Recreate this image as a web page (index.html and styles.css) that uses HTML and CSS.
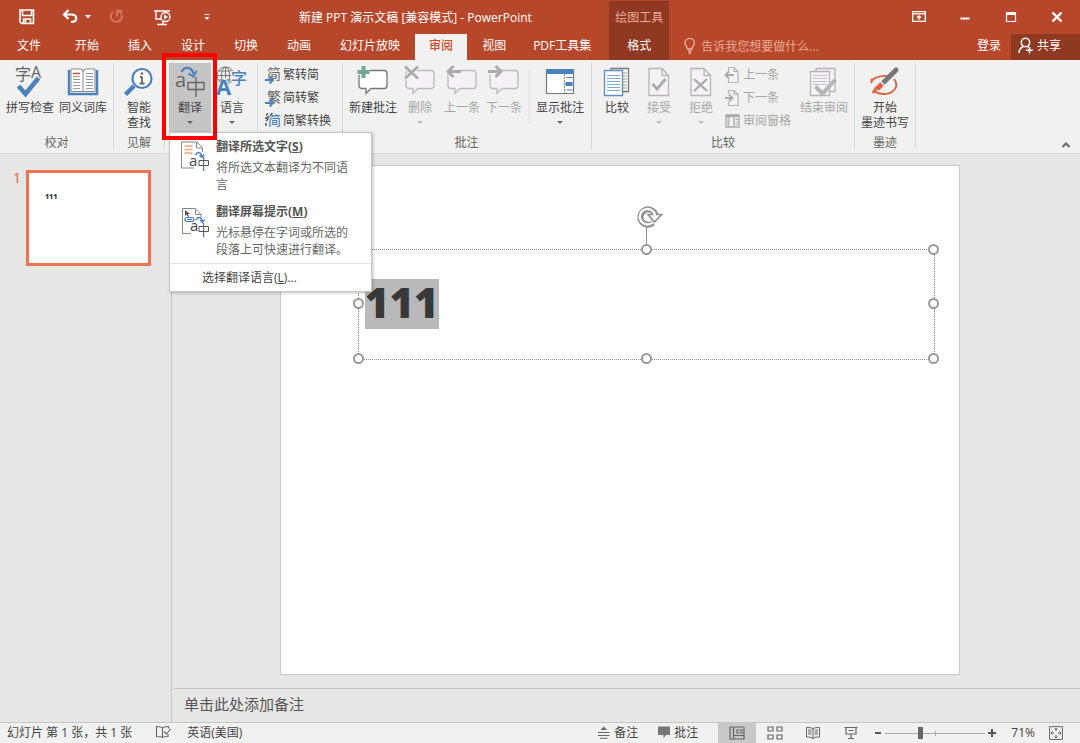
FILE: index.html
```html
<!DOCTYPE html>
<html lang="zh-CN">
<head>
<meta charset="utf-8">
<title>新建 PPT 演示文稿 [兼容模式] - PowerPoint</title>
<link rel="stylesheet" href="styles.css">
</head>
<body>
<header class="header">
  <div class="titlebar">
    <div class="quick">
      <button class="quick-btn save" aria-label="保存"><svg width="16" height="16" viewBox="19 8 16 16"><path d="M20 9h13.500v13.500h-12l-1.500-1.500zM22.500 9v5.500h9V9M23.500 22.500v-4.500h7v4.500M25.500 19v3" fill="none" stroke="#fff" stroke-width="1.600"/></svg></button>
      <button class="quick-btn undo" aria-label="撤消"><svg width="30" height="16" viewBox="62 8 30 16"><path d="M68.500 9l-4.500 4.500 4.500 4.500M64.500 13.500h6.500c7 0 7 7.500 0 7.500" fill="none" stroke="#fff" stroke-width="2.200"/><path d="M85 14h6l-3 3.500z" fill="#fff"/></svg></button>
      <button class="quick-btn redo" aria-label="恢复"><svg width="16" height="16" viewBox="109 8 16 16"><path d="M113 11a5.500 5.500 0 1 0 6-.5M117 15.500v-5.500h5.500" fill="none" stroke="#d67a62" stroke-width="1.800"/></svg></button>
      <button class="quick-btn show" aria-label="从头开始"><svg width="18" height="17" viewBox="154 8 18 17"><path d="M154 10h16M156 10v8h5M163 20v3.500M157 23.500h10" fill="none" stroke="#fff" stroke-width="1.400"/><circle cx="165.500" cy="16" r="4.500" fill="#b7472a" stroke="#fff" stroke-width="1.300"/><path d="M164 13.500l4 2.500-4 2.500z" fill="#fff"/></svg></button>
      <button class="quick-btn more" aria-label="自定义快速访问工具栏"><svg width="8" height="8" viewBox="203 12 8 8"><path d="M204.500 13.500h5" stroke="#fff"/><path d="M204.500 16h5l-2.500 3z" fill="#fff"/></svg></button>
    </div>
    <h1 class="title">新建 PPT 演示文稿 [兼容模式] - PowerPoint</h1>
  </div>
  <div class="context-title">绘图工具</div>
  <div class="window-controls">
    <button aria-label="功能区显示选项"><svg width="14" height="12" viewBox="0 0 14 12"><path d="M.7.7h12.600v9.600H.7zM.7 2.800h12.600M7 9V5M5 6.800L7 4.800l2 2" fill="none" stroke="#fff" stroke-width="1.300"/></svg></button>
    <button aria-label="最小化"><svg width="14" height="12" viewBox="0 0 14 12"><path d="M2.500 7.500h9" stroke="#fff" stroke-width="2"/></svg></button>
    <button aria-label="最大化"><svg width="14" height="12" viewBox="0 0 14 12"><path d="M2.500 1.500h9v9h-9z" fill="none" stroke="#fff" stroke-width="1.200"/><path d="M2 1h10v3H2z" fill="#fff"/></svg></button>
    <button aria-label="关闭"><svg width="14" height="12" viewBox="0 0 14 12"><path d="M2.500 1.500l9 9M11.500 1.500l-9 9" stroke="#fff" stroke-width="2.400"/></svg></button>
  </div>
  <nav class="tabs">
    <button class="tab file">文件</button><button class="tab">开始</button><button class="tab">插入</button><button class="tab">设计</button><button class="tab">切换</button><button class="tab">动画</button><button class="tab">幻灯片放映</button><button class="tab active">审阅</button><button class="tab">视图</button><button class="tab pdf">PDF工具集</button>
  </nav>
  <button class="tab context-tab">格式</button>
  <div class="account">
    <label class="tell">
      <svg width="12" height="16" viewBox="684 39 12 16"><path d="M687.500 50c0-2.500-2.500-3-2.500-6a4.700 4.700 0 0 1 9.400 0c0 3-2.500 3.500-2.500 6zM688 52h3.600M688.500 54h2.600" fill="none" stroke="#eab5a6" stroke-width="1.300"/></svg>
      <input type="text" aria-label="告诉我您想要做什么" placeholder="告诉我您想要做什么...">
    </label>
    <a class="login" href="#">登录</a>
    <button class="share"><svg width="16" height="17" viewBox="1018 37 16 17"><circle cx="1025.500" cy="42.500" r="4.200" fill="none" stroke="#fff" stroke-width="1.500"/><path d="M1019 53c0-3 1.500-5 4-6.200M1027.500 46.500l1.500 1M1029.500 47v6.500M1026 50.300h7" fill="none" stroke="#fff" stroke-width="1.500"/></svg>共享</button>
  </div>
</header>

<section class="ribbon">
  <div class="group proofing">
    <div class="tools">
      <button class="big"><svg viewBox="14 65 32 35"><text x="15" y="80" font-size="16" fill="#666">字</text><text x="31" y="78" font-size="16" fill="#666">A</text><path d="M18.500 86l7 8 13-16" fill="none" stroke="#4a82bd" stroke-width="4.500"/></svg>拼写检查</button>
      <button class="big"><svg viewBox="66 65 32 35"><path d="M68 70v24h28V70" fill="#fff" stroke="#4a82bd" stroke-width="2.500"/><path d="M70 69h9q3 0 3 2.500 0-2.500 3-2.500h9v22.500H70zM82 71v21" fill="#fff" stroke="#888"/><path d="M72 76.500h7M72 79.500h7M72 82.500h7M72 85.500h7M72 88.500h7M85 73.500h7M85 76.500h7M85 79.500h7M85 82.500h7M85 85.500h7M85 88.500h7" stroke="#999"/><path d="M72 73.500h7" stroke="#d8502c" stroke-width="1.500"/></svg>同义词库</button>
    </div>
    <div class="group-name">校对</div>
  </div>
  <div class="group">
    <div class="tools">
      <button class="big"><svg viewBox="124 65 32 35"><path d="M135 86l-8.500 8.500" stroke="#4a82bd" stroke-width="4.500"/><circle cx="143" cy="78.500" r="9.500" fill="#fff" stroke="#4a82bd" stroke-width="2.200"/><path d="M143 76.500v7M141 77h2M140.500 83.500h5" stroke="#666" stroke-width="1.800"/><circle cx="143" cy="73.500" r="1.300" fill="#666"/></svg>智能<br>查找</button>
    </div>
    <div class="group-name">见解</div>
  </div>
  <div class="group">
    <div class="tools">
      <div class="translate">
        <button class="big pressed" aria-expanded="true"><svg viewBox="174 65 32 35"><text x="175" y="87" font-size="20" fill="#666">a</text><path d="M188 82.500h16v7h-16zM196 77v20" fill="none" stroke="#666" stroke-width="1.400"/><path d="M181.500 72c2.500-5.500 10-6 12 2" fill="none" stroke="#4a82bd" stroke-width="2.200"/><path d="M188.500 73.500l5 3 3-5.500" fill="none" stroke="#4a82bd" stroke-width="2"/></svg>翻译<i class="caret"></i></button>
        <div class="menu" role="menu">
          <button class="menu-item" role="menuitem">
            <svg width="30" height="32" viewBox="180 141 30 32"><path d="M194 168h-12.500v-26H197l5.500 6v4M196.500 142v6h6" fill="none" stroke="#888"/><path d="M184.500 146h8M184.500 149.500h8M184.500 153h8" stroke="#eca878" stroke-width="1.500"/><text x="189" y="166" font-size="15" fill="#444">a</text><path d="M199 160.500h9.500v5H199zM203.700 157v14" fill="none" stroke="#555"/><path d="M195.500 155c2-4 6-3 6.500 2M199.500 155l2.500 2.500 2-3" fill="none" stroke="#4a82bd" stroke-width="1.400"/></svg>
            <span><b>翻译所选文字(<u>S</u>)</b><small>将所选文本翻译为不同语言</small></span>
          </button>
          <button class="menu-item" role="menuitem">
            <svg width="30" height="32" viewBox="180 205 30 32"><path d="M191 232.500h-8.500v-25H195l6 6v3M195.500 207.500v6h6" fill="none" stroke="#888"/><path d="M185 209v6l1.500-1.500 1.500 2.500 1-.5-1-2.500h2z" fill="#555"/><rect x="185" y="216.500" width="9" height="4" rx="2" fill="#fff" stroke="#4a82bd" stroke-width="1.200"/><path d="M187 218.500h5" stroke="#4a82bd"/><text x="190" y="230" font-size="15" fill="#444">a</text><path d="M199 225.500h9.500v5H199zM203.700 222v14" fill="none" stroke="#555"/><path d="M196 219c2-4 6-3 6.500 2M200 219l2.500 2.500 2-3" fill="none" stroke="#4a82bd" stroke-width="1.400"/></svg>
            <span><b>翻译屏幕提示(<u>M</u>)</b><small>光标悬停在字词或所选的段落上可快速进行翻译。</small></span>
          </button>
          <button class="menu-choose" role="menuitem">选择翻译语言(<u>L</u>)...</button>
        </div>
        <div class="marker"></div>
      </div>
      <button class="big"><svg viewBox="216 65 32 35"><g fill="none" stroke="#777"><circle cx="225.500" cy="75.500" r="8.500"/><ellipse cx="225.500" cy="75.500" rx="4" ry="8.500"/><path d="M217 75.500h17M218.500 71h14M218.500 80h14M225.500 67v17"/></g><path d="M225 77l-8 18h17z" fill="#f1f1f1"/><text x="216" y="95" font-size="22" font-weight="700" fill="#4a82bd">A</text><path d="M231 71h16v10h-16z" fill="#f1f1f1"/><text x="231" y="84" font-size="16" font-weight="500" fill="#4a82bd">字</text></svg>语言<i class="caret"></i></button>
      <div class="divider tall"></div>
      <div class="stack chinese">
        <button class="small"><svg viewBox="265 66 16 16"><text x="267" y="78" font-size="14" fill="#666">简</text><path d="M265 79h7M269.500 75.500l3.500 3.500-3.500 3.500" fill="none" stroke="#4a82bd" stroke-width="2"/></svg>繁转简</button>
        <button class="small"><svg viewBox="265 66 16 16"><text x="267" y="78" font-size="14" fill="#666">繁</text><path d="M265 79h7M269.500 75.500l3.500 3.500-3.500 3.500" fill="none" stroke="#4a82bd" stroke-width="2"/></svg>简转繁</button>
        <button class="small"><svg viewBox="265 66 16 16"><path d="M266 68.500l2-2M265 71h3M270.500 68l2-2M266 74l2-2M266 76v3M268 69v3" stroke="#555" stroke-width="1.500"/><text x="268" y="78" font-size="13" font-weight="500" fill="#4a82bd">简</text></svg>简繁转换</button>
      </div>
    </div>
  </div>
  <div class="group comments">
    <div class="tools">
      <button class="big"><svg viewBox="357 65 32 35"><path d="M362 70.500h22q3 0 3 3v12q0 3-3 3h-13l-5 5v-5h-4q-3 0-3-3v-12q0-3 3-3z" fill="#fff" stroke="#777" stroke-width="1.300"/><path d="M363.500 66v12M357.500 72h12" stroke="#f1f1f1" stroke-width="6"/><path d="M363.500 66v12M357.500 72h12" stroke="#71a894" stroke-width="4"/></svg>新建批注</button>
      <button class="big" disabled><svg viewBox="405 65 32 35"><path d="M410 70.500h22q3 0 3 3v12q0 3-3 3h-13l-5 5v-5h-4q-3 0-3-3v-12q0-3 3-3z" fill="#f6f1f7" stroke="#bbb" stroke-width="1.300"/><path d="M406 66.500l13 12M419 66.500l-13 12" stroke="#f1f1f1" stroke-width="5"/><path d="M406 66.500l13 12M419 66.500l-13 12" stroke="#aaa" stroke-width="2.500"/></svg>删除<i class="caret"></i></button>
      <button class="big" disabled><svg viewBox="447 65 32 35"><path d="M452 70.500h22q3 0 3 3v12q0 3-3 3h-13l-5 5v-5h-4q-3 0-3-3v-12q0-3 3-3z" fill="#f6f1f7" stroke="#bbb" stroke-width="1.300"/><path d="M462 71.500h-13" stroke="#f1f1f1" stroke-width="6"/><path d="M462 71.500h-12M454.500 66l-5.500 5.500 5.500 5.500" fill="none" stroke="#aaa" stroke-width="2.800"/></svg>上一条</button>
      <button class="big" disabled><svg viewBox="489 65 32 35"><path d="M494 70.500h22q3 0 3 3v12q0 3-3 3h-13l-5 5v-5h-4q-3 0-3-3v-12q0-3 3-3z" fill="#f6f1f7" stroke="#bbb" stroke-width="1.300"/><path d="M490 71.500h12" stroke="#f1f1f1" stroke-width="6"/><path d="M489 71.500h12M496.500 66l5.500 5.500-5.500 5.500" fill="none" stroke="#aaa" stroke-width="2.800"/></svg>下一条</button>
      <div class="divider"></div>
      <button class="big"><svg viewBox="544 65 32 35"><path d="M546.500 69.500h27v24h-27z" fill="#fff" stroke="#777" stroke-width="1.200"/><path d="M546 69h28v5h-28z" fill="#4a82bd"/><path d="M564.500 74v19" stroke="#888" stroke-dasharray="2 1"/><path d="M566.500 77.500h6M566.500 90h6" stroke="#4a82bd" stroke-width="1.200"/><path d="M565.500 84h7" stroke="#4a82bd" stroke-width="4"/></svg>显示批注<i class="caret"></i></button>
    </div>
    <div class="group-name">批注</div>
  </div>
  <div class="group compare">
    <div class="tools">
      <button class="big"><svg viewBox="602 65 32 35"><path d="M612 68.500h17.500v23H612z" fill="#fff" stroke="#777" stroke-width="1.300"/><path d="M624 73h4M624 76h4M624 79h4M624 82h4M624 85h4M624 88h4" stroke="#999"/><path d="M605.500 70.500h18v25h-18z" fill="#fff" stroke="#5c92c6" stroke-width="1.400"/><path d="M608 75.500h13M608 78.500h13M608 81.500h13M608 84.500h13M608 87.500h13M608 90.500h13" stroke="#7fa9d1"/></svg>比较</button>
      <button class="big" disabled><svg viewBox="643 65 32 35"><path d="M649 68.500h13l6.500 7v20H649zM662 68.500v7h6.500" fill="#f6f1f7" stroke="#b5b5b5" stroke-width="1.300"/><path d="M652.500 84l4.500 5 8.500-10" fill="none" stroke="#aaa" stroke-width="2.800"/></svg>接受<i class="caret"></i></button>
      <button class="big" disabled><svg viewBox="685 65 32 35"><path d="M691 68.500h13l6.500 7v20H691zM704 68.500v7h6.500" fill="#f6f1f7" stroke="#b5b5b5" stroke-width="1.300"/><path d="M694 79l13 12M707 79l-13 12" stroke="#aaa" stroke-width="2.300"/></svg>拒绝<i class="caret"></i></button>
      <div class="stack changes">
        <button class="small" disabled><svg viewBox="724 66 16 16"><path d="M728.500 70v-3.500h5.500l4 4v11h-9.500V78M734 66.500v4h4" fill="#f6f1f7" stroke="#b5b5b5" stroke-width="1.200"/><path d="M734 74h-8M729 70.500l-3.500 3.500 3.500 3.500" fill="none" stroke="#aaa" stroke-width="1.800"/></svg>上一条</button>
        <button class="small" disabled><svg viewBox="724 66 16 16"><path d="M728.500 70v-3.500h5.500l4 4v11h-9.500V78M734 66.500v4h4" fill="#f6f1f7" stroke="#b5b5b5" stroke-width="1.200"/><path d="M725 74h7M729 70.500l3.500 3.500-3.500 3.500" fill="none" stroke="#aaa" stroke-width="1.800"/></svg>下一条</button>
        <button class="small" disabled><svg viewBox="724 66 16 16"><path d="M726 68h13v12h-13zM734 68v12M726 69.500h13" fill="#f6f1f7" stroke="#aaa" stroke-width="1.300"/><path d="M728.500 70v10" stroke="#bbb" stroke-width="2"/><path d="M735.500 72.500h2.500M735.500 75h2.500M735.500 77.500h2.500" stroke="#aaa"/></svg>审阅窗格</button>
      </div>
      <button class="big" disabled><svg viewBox="810 65 32 35"><path d="M818 68.500h19v23h-19z" fill="#f6f1f7" stroke="#b5b5b5" stroke-width="1.300"/><path d="M812.500 71.500h19v24h-19z" fill="#f6f1f7" stroke="#b5b5b5" stroke-width="1.300"/><path d="M815 75.500h14M815 78.500h14M815 81.500h14M815 84.500h14" stroke="#c4c4c4"/><path d="M817.500 86.500l7 7 13-14" fill="none" stroke="#b5b5b5" stroke-width="4"/></svg>结束审阅</button>
    </div>
    <div class="group-name">比较</div>
  </div>
  <div class="group">
    <div class="tools">
      <button class="big"><svg viewBox="871 65 32 35"><path d="M889 76c-8-1-15 3-16 6M873 79c1 1 1 3 0 4M896 79c6 8-1 15-10 15-4 0-7-1-9-3" fill="none" stroke="#df6240" stroke-width="1.800"/><path d="M898 70l-12 12" stroke="#777" stroke-width="5" stroke-linecap="round"/><path d="M885 83l-1.500 1.500" stroke="#f1f1f1" stroke-width="7"/><path d="M884 84l-5 5" stroke="#df6240" stroke-width="5"/><path d="M879 87l-4 6" stroke="#df6240" stroke-width="3"/></svg>开始<br>墨迹书写</button>
    </div>
    <div class="group-name">墨迹</div>
  </div>
  <button class="collapse" aria-label="折叠功能区"><svg width="10" height="8" viewBox="0 0 10 8"><path d="M1.500 6L5 2.500 8.500 6" fill="none" stroke="#666" stroke-width="2"/></svg></button>
</section>

<main class="workspace">
  <aside class="slides">
    <span class="slide-number">1</span>
    <button class="thumb" aria-label="幻灯片 1"><span>111</span></button>
  </aside>
  <div class="editor">
    <div class="stage">
      <div class="slide">
        <div class="frame">
          <svg class="rotate" width="28" height="44" viewBox="634 205 28 44"><path d="M645.500 225v24" stroke="#8f8f8f"/><path d="M652 222a7.700 7.700 0 1 1 2.500-8" fill="none" stroke="#8f8f8f" stroke-width="6"/><path d="M647 213.500h13.500l-7 7.500z" fill="#fff" stroke="#8f8f8f" stroke-width="1.700"/><path d="M651.500 221.500a7.700 7.700 0 1 1 2.500-7" fill="none" stroke="#fff" stroke-width="2.300"/></svg>
          <i class="handle n"></i><i class="handle ne"></i><i class="handle w"></i><i class="handle e"></i><i class="handle sw"></i><i class="handle s"></i><i class="handle se"></i>
          <span class="selection">111</span>
        </div>
      </div>
    </div>
    <div class="notes">单击此处添加备注</div>
  </div>
</main>

<footer class="status">
  <span>幻灯片 第 1 张，共 1 张</span>
  <button class="proof" aria-label="拼写检查"><svg width="15" height="14" viewBox="156 725 15 14"><path d="M162.500 737.500c-1-1-3-1-6-1v-10c3 0 5 0 6 1.500 1-1.500 3-1.500 6-1.500v2M162.500 728v10M168 734v2.500c-2.500 0-4.500 0-5.500 1M164 731.500l2.500 2.500 4-5" fill="none" stroke="#666" stroke-width="1.100"/></svg></button>
  <button>英语(美国)</button>
  <div class="status-right">
    <button class="labelled"><svg width="12" height="13" viewBox="598 727 12 13"><path d="M598 733.500h11.500M598 736.500h11.500M600 739.300h7.500" stroke="#666"/><path d="M600.500 731h6.500l-3.200-3.500z" fill="#666"/></svg>备注</button>
    <button class="labelled"><svg width="12" height="13" viewBox="659 727 12 13"><path d="M659 727.500h12v8.500h-4l-2.500 3.500v-3.500H659z" fill="#777"/></svg>批注</button>
    <div class="views">
      <button class="view current" aria-label="普通视图"><svg width="16" height="14" viewBox="0 0 16 14"><path d="M1 1h14v12H1zM4.500 1v12M4.500 9.500H15M8 4h5v3H8z" fill="none" stroke="#666" stroke-width="1.200"/></svg></button>
      <button class="view" aria-label="幻灯片浏览"><svg width="16" height="14" viewBox="0 0 16 14"><path d="M1 1h5v4H1zM10 1h5v4h-5zM1 9h5v4H1zM10 9h5v4h-5z" fill="none" stroke="#666" stroke-width="1.200"/></svg></button>
      <button class="view" aria-label="阅读视图"><svg width="16" height="14" viewBox="0 0 16 14"><path d="M8 12.500C6 11 4 11 1.500 11V1.500C5 1.500 7 1.500 8 3c1-1.500 3-1.500 6.500-1.500V11C12 11 10 11 8 12.500zM8 3v10M3 4h3.500M3 6h3.500M3 8h3.500M9.500 4H13M9.500 6H13M9.500 8H13" fill="none" stroke="#666"/></svg></button>
      <button class="view" aria-label="幻灯片放映"><svg width="16" height="14" viewBox="0 0 16 14"><path d="M1.500 1.500h13M3 2v6h10V2M5.500 4.500h5M8 8v4M5 12.500h6" fill="none" stroke="#666" stroke-width="1.200"/></svg></button>
    </div>
    <div class="zoom">
      <button aria-label="缩小"><svg width="8" height="8" viewBox="0 0 8 8"><path d="M1 4h6" stroke="#555" stroke-width="2"/></svg></button>
      <input type="range" min="0" max="100" value="34" aria-label="显示比例">
      <button aria-label="放大"><svg width="8" height="8" viewBox="0 0 8 8"><path d="M0 4h8M4 0v8" stroke="#555" stroke-width="2"/></svg></button>
    </div>
    <button class="percent">71%</button>
    <button aria-label="使幻灯片适应当前窗口"><svg width="14" height="14" viewBox="0 0 14 14"><path d="M.6.6h12.800v12.800H.6z" fill="none" stroke="#666"/><path d="M7 2v3M7 9v3M2 7h3M9 7h3M5.500 3.500L7 2l1.500 1.500M5.500 10.500L7 12l1.500-1.500M3.500 5.500L2 7l1.500 1.500M10.500 5.500L12 7l-1.500 1.500" fill="none" stroke="#666"/></svg></button>
  </div>
</footer>
</body>
</html>
```
FILE: styles.css
```css
* { box-sizing: border-box; }

html, body { height: 100%; }

body {
  margin: 0;
  display: flex;
  flex-direction: column;
  overflow: hidden;
  background: #e6e6e6;
  color: #444;
  font: 12px/15px "Open Sans", "Noto Sans CJK SC", sans-serif;
}

button, input {
  margin: 0;
  padding: 0;
  border: 0;
  background: none;
  color: inherit;
  font: inherit;
}

svg { display: block; flex: none; overflow: visible; }

/* Title bar and tabs */
.header {
  flex: none;
  display: grid;
  grid-template-columns: auto auto 1fr;
  grid-template-rows: 34px 26px;
  background: #b7472a;
  color: #fff;
}

.titlebar { display: flex; align-items: center; }
.quick { display: flex; align-items: center; width: 299px; padding-left: 19px; }
.save { margin-right: 27px; }
.undo { margin-right: 17px; }
.redo { margin-right: 29px; }
.show { margin-right: 31px; }
.title { margin: 0; font-size: 12px; font-weight: 400; white-space: nowrap; }

.context-title {
  padding: 9px 6px 0;
  border-top: 1px solid #b7472a;
  background: #8f3822;
  color: #e9ab99;
}

.window-controls {
  display: flex;
  align-items: center;
  justify-content: flex-end;
  gap: 32px;
  padding-right: 16px;
}

.tabs { display: flex; gap: 1px; padding-right: 5px; }
.tab { padding: 0 14px 4px; white-space: nowrap; color: #fff; }
.file { padding: 0 19px 4px 17px; }
.pdf { padding: 0 13px 4px 12px; }
.tab.active { background: #f1f1f1; color: #d04a26; font-weight: 500; }
.context-tab { background: #8f3822; }

.account { display: flex; align-items: center; }
.tell { display: flex; align-items: center; gap: 5px; flex: 1; padding: 0 0 2px 15px; }
.tell input { flex: 1; min-width: 0; outline: 0; }
.tell input::placeholder { color: #e9ab99; opacity: 1; }
.login { margin-right: 10px; padding-bottom: 4px; color: #fff; text-decoration: none; }
.share {
  display: flex;
  align-items: center;
  align-self: stretch;
  gap: 3px;
  padding: 0 19px 3px 7px;
  background: #8f3822;
}

/* Ribbon */
.ribbon {
  flex: none;
  display: flex;
  height: 94px;
  background: #f1f1f1;
  border-bottom: 1px solid #d8d8d8;
}

.group {
  display: flex;
  flex-direction: column;
  justify-content: space-between;
  margin: 3px 0 4px;
  padding: 0 4px;
  border-right: 1px solid #d5d5d5;
}

.tools { display: flex; }
.proofing .tools { gap: 1px; }
.group-name { line-height: 12px; text-align: center; color: #666; }

.big {
  display: flex;
  flex-direction: column;
  align-items: center;
  min-width: 42px;
  height: 69px;
  padding: 2px 2px 0;
  line-height: 15px;
  white-space: nowrap;
}
.big svg { width: 32px; height: 35px; }
.big:disabled, .small:disabled { color: #a6a6a6; }
.pressed { background: #c5c5c5; }

.caret {
  margin-top: 6px;
  border: 3px solid transparent;
  border-top-color: #666;
  border-bottom: 0;
}
:disabled .caret { border-top-color: #bbb; }

.divider { width: 1px; height: 54px; margin: 7px 4px; background: #dcdcdc; }
.divider.tall { height: 68px; margin: 0 4px; background: #d5d5d5; }

.stack { display: flex; flex-direction: column; }
.small { display: flex; align-items: center; gap: 2px; height: 23px; padding: 0 3px; white-space: nowrap; }
.small svg { width: 16px; height: 16px; }
.chinese { padding-right: 4px; }
.comments { padding-right: 5px; }
.changes { padding: 0 5px 0 0; }
.changes .small { gap: 3px; padding: 0 2px; }

.collapse { align-self: flex-end; margin: 0 9px 4px auto; }

/* Translate menu */
.translate { position: relative; }
.menu {
  position: absolute;
  z-index: 2;
  top: 69px;
  left: 0;
  width: 203px;
  background: #fff;
  border: 1px solid #c6c6c6;
  box-shadow: 1px 1px 3px rgba(0, 0, 0, .25);
}
.menu-item {
  display: flex;
  align-items: flex-start;
  gap: 6px;
  width: 100%;
  padding: 5px 20px 5px 10px;
  text-align: left;
}
.menu-item svg { margin-top: 3px; }
.menu-item b { display: block; margin-bottom: 3px; line-height: 18px; color: #555; }
.menu-item small { display: block; font-size: 12px; line-height: 17px; color: #666; }
.menu-choose {
  width: 100%;
  height: 28px;
  padding-left: 32px;
  border-top: 1px solid #e1e1e1;
  text-align: left;
}
.marker {
  position: absolute;
  z-index: 3;
  inset: -10px -6px -8px -7px;
  border: 4px solid #fd0000;
  pointer-events: none;
}

/* Slides and editor */
.workspace { flex: 1; display: flex; min-height: 0; }
.slides {
  flex: none;
  display: flex;
  align-items: flex-start;
  gap: 5px;
  width: 172px;
  padding: 16px 0 0 13px;
  border-right: 1px solid #c6c6c6;
}
.slide-number { font-size: 14px; color: #d8603e; }
.thumb {
  width: 125px;
  height: 96px;
  border: 3px solid #f07250;
  background: #fff;
  text-align: left;
}
.thumb span {
  display: block;
  height: 54px;
  padding-left: 16px;
  font-size: 7px;
  line-height: 12px;
  font-weight: 800;
}

.editor { flex: 1; display: flex; flex-direction: column; min-width: 0; padding-left: 2px; }
.stage {
  flex: 1;
  display: flex;
  justify-content: center;
  min-height: 0;
  padding: 11px 15px 13px 0;
}
.slide {
  position: relative;
  height: 100%;
  aspect-ratio: 4 / 3;
  background: #fff;
  border: 1px solid #c8c8c8;
}
.frame {
  position: absolute;
  left: 11.4%;
  top: 16.3%;
  width: 85.2%;
  height: 21.8%;
  border: 1px dotted #8c8c8c;
}
.selection {
  position: absolute;
  left: 6px;
  top: 29px;
  height: 50px;
  background: #b9b9b9;
  color: #383838;
  font-size: 42px;
  line-height: 45px;
  font-weight: 800;
}
.handle {
  position: absolute;
  width: 11px;
  height: 11px;
  margin: -6px;
  border: 2px solid #999;
  border-radius: 50%;
  background: #fff;
}
.n { left: 50%; top: 0; }
.ne { left: 100%; top: 0; }
.w { left: 0; top: 50%; }
.e { left: 100%; top: 50%; }
.sw { left: 0; top: 100%; }
.s { left: 50%; top: 100%; }
.se { left: 100%; top: 100%; }
.rotate { position: absolute; left: 50%; bottom: 100%; margin-left: -12px; }
.notes {
  flex: none;
  height: 34px;
  padding-left: 10px;
  border-top: 1px solid #c6c6c6;
  font-size: 15px;
  line-height: 30px;
  color: #555;
}

/* Status bar */
.status {
  flex: none;
  display: flex;
  align-items: center;
  height: 21px;
  padding: 0 17px 0 7px;
  background: #f1f1f1;
  border-top: 1px solid #c6c6c6;
  white-space: nowrap;
}
.status > span, .status > button, .labelled, .percent { padding-bottom: 2px; }
.proof { margin: 0 16px 0 24px; }
.status-right { display: flex; align-items: center; align-self: stretch; margin-left: auto; }
.labelled { display: flex; align-items: center; gap: 4px; margin-right: 20px; }
.views { display: flex; align-self: stretch; }
.view { display: flex; align-items: center; justify-content: center; width: 38px; }
.current { background: #c8c8c8; }
.zoom { display: flex; align-items: center; gap: 3px; margin: 0 15px 0 4px; }
.zoom input {
  appearance: none;
  width: 100px;
  height: 12px;
  margin: 0;
  background:
    linear-gradient(#aaa, #aaa) 50% 50% / 1px 5px no-repeat,
    linear-gradient(#aaa, #aaa) 0 50% / 100% 1px no-repeat;
}
.zoom input::-webkit-slider-thumb {
  appearance: none;
  width: 5px;
  height: 12px;
  background: #666;
}
.percent { margin-right: 14px; }
```
